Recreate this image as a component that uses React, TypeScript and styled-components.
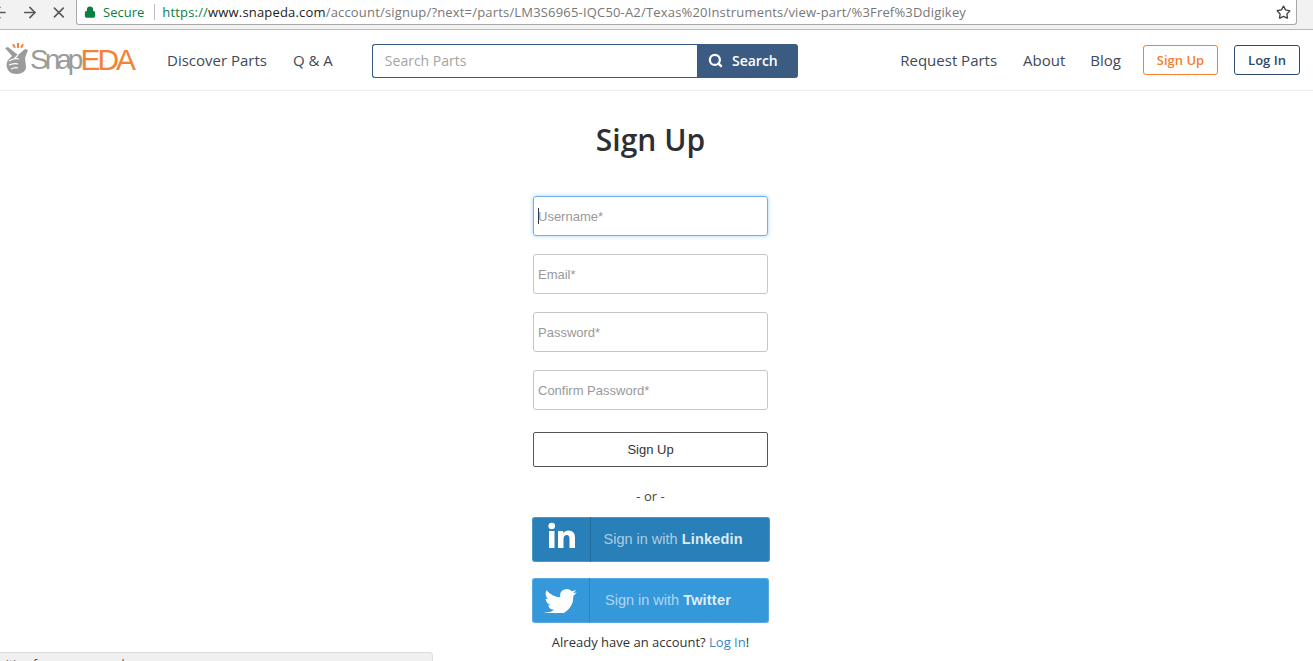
import React from "react";
import styled, { createGlobalStyle } from "styled-components";
import { Search as SearchIcon, ArrowLeft, ArrowRight, X, Lock, Star } from "lucide-react";

const Global = createGlobalStyle`
  html, body { margin: 0; padding: 0; background: #fff; height: 100%; overflow: hidden; }
  * { box-sizing: border-box; }
  body { font-family: "Open Sans", "Liberation Sans", sans-serif; color: #333; }
`;

const Page = styled.div`
  position: relative;
  width: 1313px;
  height: 661px;
  overflow: hidden;
`;

const ChromeBar = styled.div`
  height: 30px;
  background: #f2f2f2;
  border-bottom: 1px solid #b8b8b8;
  display: flex;
  align-items: flex-start;
  padding-right: 16px;
`;

const NavIcons = styled.div`
  width: 77px;
  height: 24px;
  flex: none;
  display: flex;
  align-items: center;
  gap: 12px;
  margin-left: -9px;
  color: #5a5a5a;
`;

const Omnibox = styled.div`
  flex: 1;
  height: 25px;
  background: #fff;
  border: 1px solid #a9a9a9;
  border-top: none;
  border-radius: 0 0 3px 3px;
  display: flex;
  align-items: center;
  padding: 0 5px 0 7px;
  font-size: 13px;
  margin-left: 8px;
`;

const Secure = styled.span`
  color: #0b8043;
  display: flex;
  align-items: center;
  gap: 7px;
  padding-right: 10px;
  margin-right: 7px;
  border-right: 1px solid #bdbdbd;
  line-height: 16px;
`;

const Url = styled.span`
  flex: 1;
  white-space: nowrap;
  color: #777;
  letter-spacing: 0.18px;
`;

const UrlHost = styled.span`
  color: #222;
`;

const UrlScheme = styled.span`
  color: #0b8043;
`;

const Navbar = styled.header`
  height: 61px;
  border-bottom: 1px solid #eee;
  display: flex;
  align-items: center;
  padding: 0 13px 0 4px;
`;

const Logo = styled.div`
  width: 131px;
  height: 40px;
  flex: none;
  display: flex;
  align-items: center;
  font-family: "Liberation Sans", sans-serif;
  line-height: 40px;
`;

const LogoSnap = styled.span`
  color: #9b9b9b;
  font-size: 28px;
  letter-spacing: -4px;
  margin-left: -1px;
`;

const LogoEda = styled.span`
  color: #f58233;
  font-size: 30px;
  letter-spacing: -3px;
  margin-left: 1px;
`;

const NavLink = styled.a<{ $gap: number }>`
  margin-left: ${(p) => p.$gap}px;
  font-size: 15px;
  color: #3d4a57;
  white-space: nowrap;
  flex: none;
`;

const SearchGroup = styled.form`
  width: 426px;
  height: 34px;
  margin: 2px 0 0 39px;
  display: flex;
  flex: none;
`;

const SearchField = styled.div`
  flex: 1;
  border: 1px solid #35587f;
  border-right: none;
  border-radius: 3px 0 0 3px;
  padding: 0 0 2px 12px;
  display: flex;
  align-items: center;
  font-size: 14px;
  color: #a3a3a3;
`;

const SearchButton = styled.button`
  width: 101px;
  border: none;
  border-radius: 0 3px 3px 0;
  background: #3b5b82;
  color: #fff;
  font: 600 14px "Open Sans", sans-serif;
  display: flex;
  align-items: center;
  justify-content: center;
  gap: 9px;
  padding: 0 10px 2px 1px;
`;

const Spacer = styled.div`
  flex: 1;
`;

const OutlineButton = styled.a<{ $color: string; $w: number; $gap: number }>`
  width: ${(p) => p.$w}px;
  height: 30px;
  margin-left: ${(p) => p.$gap}px;
  flex: none;
  border: 1px solid ${(p) => p.$color};
  border-radius: 3px;
  color: ${(p) => p.$color};
  font-size: 13px;
  font-weight: 600;
  display: flex;
  align-items: center;
  justify-content: center;
`;

const Main = styled.main`
  display: flex;
  flex-direction: column;
  align-items: center;
  padding-right: 12px;
`;

const Title = styled.h1`
  margin: 28px 0 0;
  height: 42px;
  line-height: 42px;
  font-size: 30px;
  font-weight: 600;
  color: #2f2f33;
`;

const Form = styled.form`
  width: 235px;
  margin-top: 35px;
  display: flex;
  flex-direction: column;
  gap: 18px;
`;

const Field = styled.div<{ $focus?: boolean }>`
  height: 40px;
  border: 1px solid ${(p) => (p.$focus ? "#6fb3ee" : "#c6c6c6")};
  border-radius: 3px;
  box-shadow: ${(p) => (p.$focus ? "0 0 4px rgba(102,175,233,.6)" : "none")};
  padding-left: 4px;
  display: flex;
  align-items: center;
  font: 13px "Liberation Sans", sans-serif;
  color: #999;
`;

const Caret = styled.span`
  width: 1px;
  height: 16px;
  background: #333;
  margin-right: -1px;
  flex: none;
`;

const Submit = styled.button`
  margin-top: 4px;
  height: 35px;
  width: 100%;
  background: #fff;
  border: 1px solid #555;
  border-radius: 2px;
  font: 13px "Liberation Sans", sans-serif;
  color: #333;
`;

const Or = styled.div`
  margin-top: 20px;
  height: 18px;
  line-height: 18px;
  font-size: 13px;
  color: #444;
`;

const Social = styled.a<{
  $bg: string;
  $edge: string;
  $w: number;
  $rail: number;
  $mt: number;
  $pad: number;
}>`
  width: ${(p) => p.$w}px;
  height: 45px;
  margin-top: ${(p) => p.$mt}px;
  background: ${(p) => p.$bg};
  border-radius: 3px;
  box-shadow: inset 0 0 0 1px rgba(255, 255, 255, 0.18);
  display: flex;
  align-items: center;
  color: rgba(255, 255, 255, 0.62);
  font: 14.5px "Liberation Sans", sans-serif;

  & > svg {
    flex: none;
    width: ${(p) => p.$rail}px;
  }

  & > span {
    flex: 1;
    align-self: stretch;
    display: flex;
    align-items: center;
    padding: 0 0 2px ${(p) => p.$pad}px;
    border-left: 1px solid ${(p) => p.$edge};
  }

  & b {
    color: rgba(255, 255, 255, 0.85);
    margin-left: 4px;
    letter-spacing: 0.2px;
  }
`;

const Already = styled.p`
  margin: 10px 0 0;
  line-height: 18px;
  font-size: 13px;
  color: #333;
`;

const LogIn = styled.a`
  color: #3b86c6;
`;

const StatusBubble = styled.div`
  position: absolute;
  left: 0;
  bottom: 0;
  width: 433px;
  height: 9px;
  background: #f0f0f0;
  border: 1px solid #ddd;
  border-left: none;
  border-bottom: none;
  border-radius: 0 4px 0 0;
  overflow: hidden;
  font-size: 12px;
  line-height: 18px;
  color: #444;
  padding-top: 3px;
  text-indent: -12px;
  white-space: nowrap;
`;

const HandLogo = () => (
  <svg width="27" height="34" viewBox="0 0 27 34" style={{ flex: "none" }}>
    <g fill="#f58233">
      <rect x="9" y="1" width="2" height="4" transform="rotate(-30 10 3)" />
      <rect x="13" y="0" width="2" height="5" />
      <rect x="17" y="1" width="2" height="4" transform="rotate(30 18 3)" />
    </g>
    <path
      d="M1 5l3-1 10 8 7-6 3 1-3 8 1 9c0 4-4 7-9 7-4 0-7-1-9-4-2-3-2-7 0-10l4-4z"
      fill="#9b9b9b"
    />
    <path
      d="M5 18c3-2 7-3 10-2M5 22c3-1 6-2 9-1M7 26c2-1 5-2 7-1M14 12l-4 4"
      stroke="#fff"
      strokeWidth="1.2"
      fill="none"
    />
  </svg>
);

const LinkedinGlyph = () => (
  <svg height="28" viewBox="0 0 58 28" fill="#fff" style={{ marginTop: -8 }}>
    <rect x="17" y="9" width="5.500" height="17" />
    <circle cx="19.700" cy="4" r="3.300" />
    <path d="M26 9h5.300v2.400c1.100-1.800 3-2.800 5.200-2.800 4.500 0 6.500 2.900 6.500 7.300V26h-5.500v-9.400c0-2.200-.8-3.500-2.700-3.500-2 0-3.300 1.500-3.300 3.600V26H26z" />
  </svg>
);

const TwitterGlyph = () => (
  <svg height="27" viewBox="-6 0 36 20" fill="#fff" style={{ marginTop: -3 }}>
    <path d="M24 4.600a9.800 9.800 0 0 1-2.800.8 4.900 4.900 0 0 0 2.200-2.700 9.800 9.800 0 0 1-3.100 1.200 4.900 4.900 0 0 0-8.400 4.500A14 14 0 0 1 1.700 3.200a4.900 4.900 0 0 0 1.500 6.600 4.900 4.900 0 0 1-2.200-.6c0 2.400 1.700 4.400 4 4.900a4.900 4.900 0 0 1-2.200.1 4.900 4.900 0 0 0 4.600 3.400A9.900 9.900 0 0 1 0 19.600a14 14 0 0 0 21.500-12.400A10 10 0 0 0 24 4.600z" />
  </svg>
);

export default function App() {
  return (
    <Page>
      <Global />
      <ChromeBar>
        <NavIcons>
          <ArrowLeft size={19} strokeWidth={2.2} />
          <ArrowRight size={19} strokeWidth={2.2} />
          <X size={19} strokeWidth={2.2} />
        </NavIcons>
        <Omnibox>
          <Secure>
            <Lock size={12} fill="#0b8043" strokeWidth={2.5} />
            Secure
          </Secure>
          <Url>
            <UrlScheme>https://</UrlScheme>
            <UrlHost>www.snapeda.com</UrlHost>
            /account/signup/?next=/parts/LM3S6965-IQC50-A2/Texas%20Instruments/view-part/%3Fref%3Ddigikey
          </Url>
          <Star size={15} color="#444" strokeWidth={2.2} />
        </Omnibox>
      </ChromeBar>
      <Navbar>
        <Logo>
          <HandLogo />
          <LogoSnap>Snap</LogoSnap>
          <LogoEda>EDA</LogoEda>
        </Logo>
        <NavLink $gap={32}>Discover Parts</NavLink>
        <NavLink $gap={26}>Q &amp; A</NavLink>
        <SearchGroup>
          <SearchField>Search Parts</SearchField>
          <SearchButton type="button">
            <SearchIcon size={15} strokeWidth={3.6} />
            Search
          </SearchButton>
        </SearchGroup>
        <Spacer />
        <NavLink $gap={0}>Request Parts</NavLink>
        <NavLink $gap={26}>About</NavLink>
        <NavLink $gap={25}>Blog</NavLink>
        <OutlineButton $color="#f5812f" $w={75} $gap={22}>Sign Up</OutlineButton>
        <OutlineButton $color="#2c4a70" $w={66} $gap={16}>Log In</OutlineButton>
      </Navbar>
      <Main>
        <Title>Sign Up</Title>
        <Form>
          <Field $focus>
            <Caret />
            Username*
          </Field>
          <Field>Email*</Field>
          <Field>Password*</Field>
          <Field>Confirm Password*</Field>
          <Submit type="button">Sign Up</Submit>
        </Form>
        <Or>- or -</Or>
        <Social $bg="#2980b9" $edge="#236d9e" $w={238} $rail={58} $mt={12} $pad={13}>
          <LinkedinGlyph />
          <span>
            Sign in with <b>Linkedin</b>
          </span>
        </Social>
        <Social $bg="#3498db" $edge="#2d85c2" $w={237} $rail={57} $mt={16} $pad={15}>
          <TwitterGlyph />
          <span>
            Sign in with <b>Twitter</b>
          </span>
        </Social>
        <Already>
          Already have an account? <LogIn>Log In</LogIn>!
        </Already>
      </Main>
      <StatusBubble>Waiting for www.snapeda.com...</StatusBubble>
    </Page>
  );
}
